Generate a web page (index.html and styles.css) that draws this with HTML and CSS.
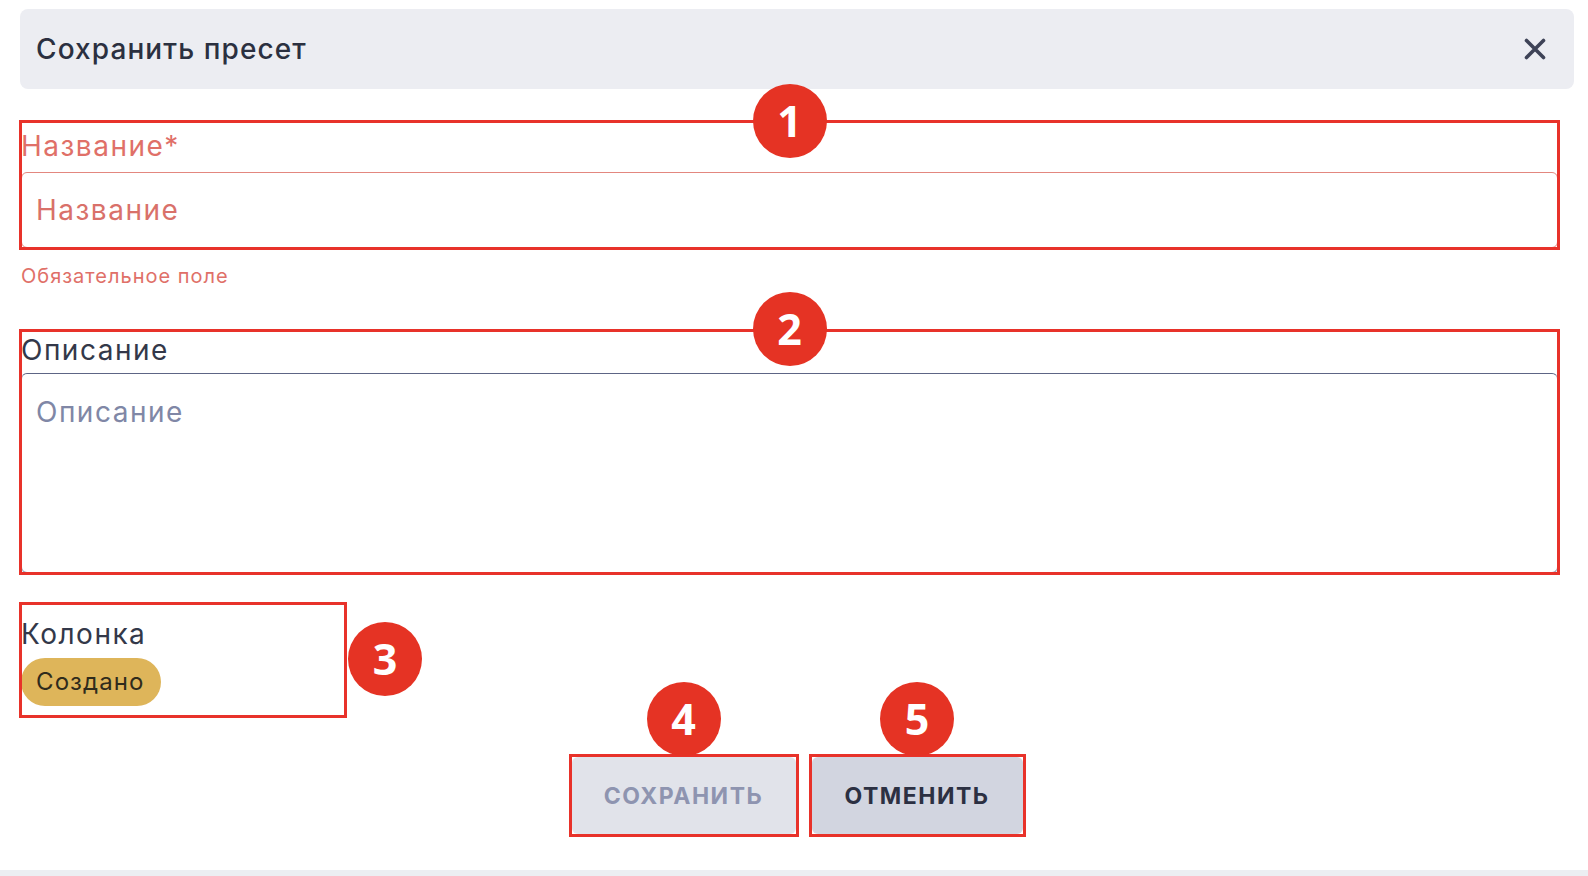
FILE: index.html
```html
<!DOCTYPE html>
<html lang="ru">
<head>
<meta charset="utf-8">
<title>Сохранить пресет</title>
<link rel="stylesheet" href="styles.css">
</head>
<body>
<div class="dialog">
  <div class="header">
    <span class="title">Сохранить пресет</span>
    <button class="close" aria-label="Закрыть">
      <svg width="22" height="22" viewBox="0 0 22 22"><path d="M2.5 2.5 L19.5 19.5 M19.5 2.5 L2.5 19.5" stroke="#3e4357" stroke-width="3.6" stroke-linecap="round" fill="none"/></svg>
    </button>
  </div>

  <div class="form">
    <div class="field field--name marked">
      <span class="num num--top">1</span>
      <div class="label label--error">Название*</div>
      <div class="input input--error"><span class="ph ph--error">Название</span></div>
    </div>
    <div class="error">Обязательное поле</div>

    <div class="field field--desc marked">
      <span class="num num--top">2</span>
      <div class="label">Описание</div>
      <div class="textarea"><span class="ph">Описание</span></div>
    </div>

    <div class="field field--column marked">
      <span class="num num--side">3</span>
      <div class="label">Колонка</div>
      <span class="badge">Создано</span>
    </div>
  </div>

  <div class="actions">
    <div class="btn-mark"><span class="num num--btn">4</span><button class="btn btn--save">СОХРАНИТЬ</button></div>
    <div class="btn-mark"><span class="num num--btn">5</span><button class="btn btn--cancel">ОТМЕНИТЬ</button></div>
  </div>
</div>
<div class="strip"></div>
</body>
</html>
```

FILE: styles.css
```css
* { box-sizing: border-box; }
html, body { height: 100%; }
body {
  margin: 0;
  background: #ffffff;
  font-family: Inter, "Open Sans", "Noto Sans", sans-serif;
  color: #333849;
  display: flex;
  flex-direction: column;
}
.dialog {
  flex: 1;
  padding: 9px 14px 0 20px;
}
.header {
  height: 80px;
  background: #ecedf2;
  border-radius: 8px;
  display: flex;
  align-items: center;
  justify-content: space-between;
  padding: 0 28px 0 16px;
}
.title {
  font-size: 28px;
  font-weight: 500;
  letter-spacing: 1.1px;
  color: #2b3040;
}
.close {
  border: 0;
  background: transparent;
  padding: 0;
  width: 22px;
  height: 22px;
  display: flex;
}
.form {
  margin: 0 16px 0 1px;
}
.marked {
  outline: 3px solid #e8322a;
  outline-offset: -1px;
}
.field {
  position: relative;
}
.field--name {
  margin-top: 33px;
  padding-top: 6px;
}
.field--name .label {
  margin-bottom: 8px;
}
.field--desc {
  margin-top: 43px;
  padding-top: 1px;
}
.field--desc .label {
  margin-bottom: 5px;
}
.field--column {
  margin-top: 31px;
  width: 324px;
  padding: 12px 0 10px;
}
.label {
  font-size: 28px;
  line-height: 36px;
  letter-spacing: 1.5px;
  margin-bottom: 6px;
  color: #333849;
}
.label--error { color: #e07068; }
.input, .textarea {
  border: 1px solid #a2a7bc;
  border-top-color: #5d6585;
  border-radius: 6px;
  padding: 0 14px;
}
.input {
  height: 76px;
  display: flex;
  align-items: center;
}
.input--error {
  border-color: #e3877f;
}
.textarea {
  height: 200px;
  padding-top: 20px;
}
.ph {
  font-size: 28px;
  line-height: 36px;
  letter-spacing: 1.5px;
  color: #8087a6;
}
.ph--error { color: #d9716a; }
.error {
  margin-top: 16px;
  font-size: 20px;
  line-height: 24px;
  letter-spacing: 1px;
  color: #e07068;
}
.badge {
  display: inline-block;
  height: 48px;
  line-height: 48px;
  padding: 0 16px 0 15px;
  border-radius: 24px;
  background: #deb55a;
  color: #2f2b1c;
  font-size: 24px;
  letter-spacing: 1.1px;
}
.num {
  position: absolute;
  width: 74px;
  height: 74px;
  border-radius: 50%;
  background: #e53324;
  color: #ffffff;
  font-family: "Open Sans", "Noto Sans", sans-serif;
  font-weight: 700;
  font-size: 43px;
  line-height: 74px;
  text-align: center;
  letter-spacing: 0;
  z-index: 1;
}
.num--top {
  left: calc(50% - 37px);
  top: -38px;
}
.field--desc .num--top { top: -39px; }
.num--side {
  left: calc(100% + 3px);
  top: 18px;
}
.num--btn {
  left: calc(50% - 37px);
  top: -75px;
}
.actions {
  margin-top: 41px;
  display: flex;
  justify-content: center;
  gap: 16px;
}
.btn-mark {
  position: relative;
  display: flex;
  outline: 3px solid #e8322a;
  outline-offset: 0;
}
.btn {
  height: 77px;
  border: 0;
  border-radius: 6px;
  font-family: Inter, "Open Sans", "Noto Sans", sans-serif;
  font-size: 23px;
  font-weight: 700;
  letter-spacing: 1.5px;
}
.btn--save {
  width: 224px;
  background: #e1e3ea;
  color: #8e94b0;
}
.btn--cancel {
  width: 211px;
  background: #d2d5e0;
  color: #2c3042;
}
.strip {
  height: 6px;
  background: #eceef2;
}
```
